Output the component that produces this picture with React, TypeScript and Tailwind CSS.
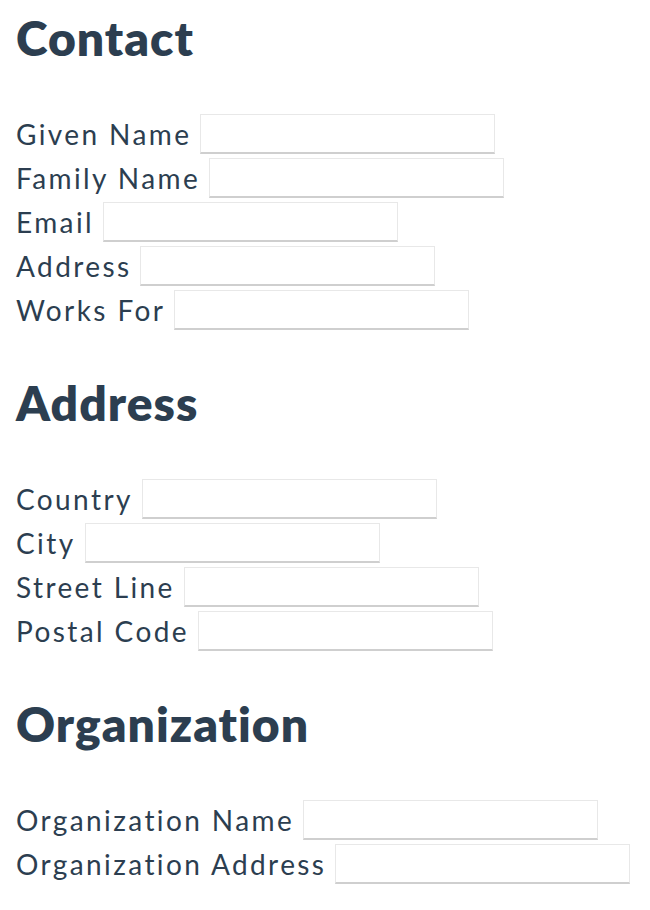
import React from 'react';

type Section = {
  title: string;
  fields: string[];
};

const sections: Section[] = [
  {
    title: 'Contact',
    fields: ['Given Name', 'Family Name', 'Email', 'Address', 'Works For'],
  },
  {
    title: 'Address',
    fields: ['Country', 'City', 'Street Line', 'Postal Code'],
  },
  {
    title: 'Organization',
    fields: ['Organization Name', 'Organization Address'],
  },
];

const FieldRow = ({ label }: { label: string }) => (
  <div className="flex items-center h-10">
    <label className="text-[28px] leading-10 tracking-[2.4px] whitespace-nowrap">
      {label}
    </label>
    <input
      type="text"
      aria-label={label}
      className="ml-[9px] w-[295px] h-10 shrink-0 bg-white border border-[#e8e8e8] border-b-2 border-b-[#cfcfcf] outline-none"
    />
  </div>
);

const App: React.FC = () => {
  return (
    <div
      className="min-h-screen bg-white text-[#2c3e50] pt-[14px] px-4 [font-variant-ligatures:none]"
      style={{ fontFamily: 'Lato, "Open Sans", Arial, sans-serif' }}
    >
      {sections.map((section, i) => (
        <section key={section.title} className={i > 0 ? 'mt-[49px]' : ''}>
          <h2 className="text-[48px] leading-[48px] font-extrabold tracking-[1px] mb-[52px]">
            {section.title}
          </h2>
          <div className="flex flex-col gap-1">
            {section.fields.map((field) => (
              <FieldRow key={field} label={field} />
            ))}
          </div>
        </section>
      ))}
    </div>
  );
};

export default App;
